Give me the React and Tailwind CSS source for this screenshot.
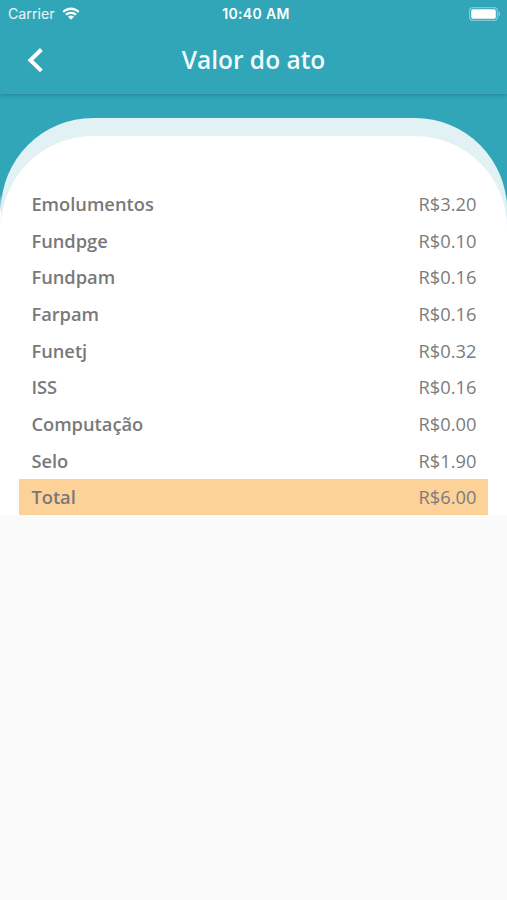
import { useState } from 'react';

const ITEMS = [
  { label: 'Emolumentos', value: 3.2 },
  { label: 'Fundpge', value: 0.1 },
  { label: 'Fundpam', value: 0.16 },
  { label: 'Farpam', value: 0.16 },
  { label: 'Funetj', value: 0.32 },
  { label: 'ISS', value: 0.16 },
  { label: 'Computação', value: 0 },
  { label: 'Selo', value: 1.9 },
];

const StatusBar = () => (
  <div className="grid h-[27px] grid-cols-3 items-center pl-2 pr-[6px] font-['Inter',sans-serif] text-[14px] leading-none text-white">
    <div className="flex items-center gap-[7px]">
      <span className="pt-px text-[14.2px] text-white/90">Carrier</span>
      <svg width="18" height="13" viewBox="0 0 18 13">
        <path d="M0.5 4.2C5.3 -0.7 12.7 -0.7 17.5 4.2L16 5.8C12 2 6 2 2 5.8Z" fill="white" />
        <path d="M3.2 7C6.5 3.9 11.5 3.9 14.8 7L13.2 8.6C10.8 6.4 7.2 6.4 4.8 8.6Z" fill="white" />
        <path d="M9 12.8L6 9.8C7.7 8.2 10.3 8.2 12 9.8Z" fill="white" />
      </svg>
    </div>
    <span className="pl-[3px] text-center font-semibold tracking-[0.35px]">10:40 AM</span>
    <svg className="justify-self-end" width="32" height="14" viewBox="0 0 32 14">
      <rect x="0.6" y="0.6" width="27.8" height="12.8" rx="3.4" fill="none" stroke="white" strokeOpacity="0.4" strokeWidth="1.2" />
      <rect x="2.2" y="2.2" width="24.6" height="9.6" rx="1.8" fill="white" />
      <path d="M29.6 4.6C31.4 5.2 31.4 8.8 29.6 9.4Z" fill="white" fillOpacity="0.5" />
    </svg>
  </div>
);

const Header = () => (
  <header className="relative h-[94px] bg-[#31a6b8] shadow-[0_1px_4px_rgba(0,50,70,0.32)]">
    <StatusBar />
    <div className="grid h-[66px] grid-cols-[64px_1fr_64px] items-center">
      <button className="ml-[27px] w-4" aria-label="Voltar">
        <svg width="16" height="25" viewBox="0 0 16 25" fill="none">
          <path d="M14.4 1.5L3.4 12.2L14.4 22.9" stroke="white" strokeWidth="4" />
        </svg>
      </button>
      <h1 className="text-center text-[24.5px] font-semibold leading-none text-white/95">
        Valor do ato
      </h1>
    </div>
  </header>
);

const Row = ({ label, value, highlight }) => (
  <div
    className={`flex h-[36.65px] items-center justify-between px-3 text-[18.3px] ${
      highlight ? 'bg-[#fcd299]' : ''
    }`}
  >
    <span className="font-semibold text-[#797979]">{label}</span>
    <span className="text-[#7c7c7c]">R${value.toFixed(2)}</span>
  </div>
);

const App = () => {
  const [items] = useState(ITEMS);
  const total = items.reduce((sum, item) => sum + item.value, 0);

  return (
    <div className="min-h-screen bg-[#fafafa] font-['Open_Sans',sans-serif]">
      <Header />
      <main className="bg-[linear-gradient(#31a6b8_100px,white_118px)] pt-6">
        <div className="ml-px rounded-t-[92px] bg-[#e2f1f4] pt-[18px]">
          <div className="rounded-t-[92px] bg-white pl-[18.4px] pr-[18.6px] pt-[49.6px]">
            {items.map((item) => (
              <Row key={item.label} label={item.label} value={item.value} />
            ))}
            <Row label="Total" value={total} highlight />
          </div>
        </div>
      </main>
    </div>
  );
};

export default App;
